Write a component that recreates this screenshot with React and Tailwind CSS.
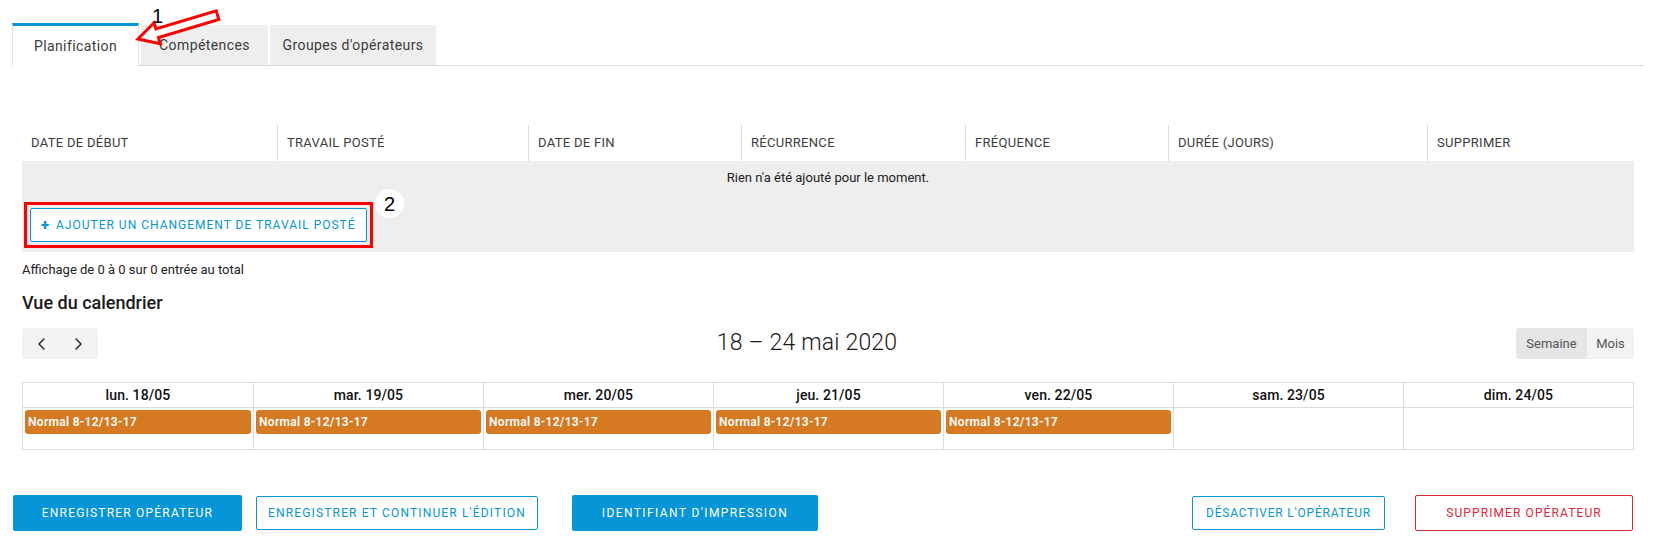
import React, { useState } from "react";

const cols = [
  { label: "Date de début", w: "w-[255px]" },
  { label: "Travail posté", w: "w-[251px]" },
  { label: "Date de fin", w: "w-[213px]" },
  { label: "Récurrence", w: "w-[224px]" },
  { label: "Fréquence", w: "w-[203px]" },
  { label: "Durée (jours)", w: "w-[259px]" },
  { label: "Supprimer", w: "w-[207px]" },
];

const days = [
  { label: "lun. 18/05", shift: true },
  { label: "mar. 19/05", shift: true },
  { label: "mer. 20/05", shift: true },
  { label: "jeu. 21/05", shift: true },
  { label: "ven. 22/05", shift: true },
  { label: "sam. 23/05", shift: false },
  { label: "dim. 24/05", shift: false },
];

const Chevron = ({ dir }) => (
  <svg width="10" height="14" viewBox="0 0 10 14" fill="none">
    <path
      d={dir === "left" ? "M7 2 L2 7 L7 12" : "M3 2 L8 7 L3 12"}
      stroke="#333"
      strokeWidth="1.6"
      strokeLinecap="round"
      strokeLinejoin="round"
    />
  </svg>
);

const App = () => {
  const [tab, setTab] = useState("planif");
  const [view, setView] = useState("semaine");

  return (
    <div className="relative w-full min-h-[543px] bg-white font-['Roboto',sans-serif] text-[#333]">
      {/* annotation 1 : arrow over the tabs */}
      <svg
        className="absolute left-0 top-0 pointer-events-none"
        width="240"
        height="60"
        viewBox="0 0 240 60"
      >
        <polygon
          points="138,39 154,22.8 155.9,29 216.2,10.9 218.8,19.5 158.5,37.6 160.3,43.8"
          fill="white"
          stroke="#ff0000"
          strokeWidth="3"
          strokeLinejoin="miter"
        />
        <text
          x="152"
          y="23"
          fontFamily="Liberation Sans, Arial, sans-serif"
          fontSize="20"
          fill="#000"
        >
          1
        </text>
      </svg>

      {/* tabs */}
      <div className="pt-[23px] pl-[12px] pr-[19px]">
        <div className="flex items-end border-b border-[#d9d9d9] h-[43px]">
          <button
            onClick={() => setTab("planif")}
            className={`w-[127px] h-[43px] -mb-px text-[14px] tracking-[0.4px] ${
              tab === "planif"
                ? "bg-white border-t-[3px] border-t-[#0696d7] border-x border-x-[#e3e3e3] text-[#3c3c3c]"
                : "bg-[#eeeeee] mt-[3px] h-[40px] text-[#3c3c3c]"
            }`}
          >
            Planification
          </button>
          <button
            onClick={() => setTab("comp")}
            className="w-[127px] h-[40px] ml-[2px] bg-[#eeeeee] text-[14px] tracking-[0.4px] text-[#3c3c3c] rounded-t-[2px]"
          >
            Compétences
          </button>
          <button
            onClick={() => setTab("groupes")}
            className="w-[166px] h-[40px] ml-[2px] bg-[#eeeeee] text-[14px] tracking-[0.4px] text-[#3c3c3c] rounded-t-[2px]"
          >
            Groupes d'opérateurs
          </button>
        </div>
      </div>

      <div className="ml-[22px] mr-[29px]">
        {/* shift table */}
        <div className="mt-[59px]">
          <div className="flex h-[36px] bg-white">
            {cols.map((c, i) => (
              <div
                key={c.label}
                className={`${c.w} flex items-center pl-[9px] text-[13px] uppercase tracking-[0.3px] text-[#3c3c3c] ${
                  i > 0 ? "border-l border-[#dddddd]" : ""
                }`}
              >
                {c.label}
              </div>
            ))}
          </div>
          <div className="bg-[#eeeeee] h-[91px] flex flex-col">
            <div className="h-[34px] flex items-center justify-center text-[13px] text-[#222]">
              Rien n'a été ajouté pour le moment.
            </div>
            <div className="relative pl-[2px] pt-[7px]">
              <div className="inline-block border-[3px] border-[#ff0000] p-[3px]">
                <button className="flex items-center gap-[6px] h-[34px] px-[10px] bg-white border border-[#0696d7] rounded-[2px] text-[#0696d7] text-[12px] uppercase tracking-[1px]">
                  <span className="text-[15px] font-black leading-none">+</span>
                  Ajouter un changement de travail posté
                </button>
              </div>
              <div className="absolute left-[353px] top-[-6px] w-[29px] h-[29px] rounded-full bg-white flex items-center justify-center font-['Liberation_Sans',sans-serif] text-[20px] text-black">
                2
              </div>
            </div>
          </div>
        </div>

        <div className="mt-[10px] text-[13px] text-[#222] leading-[16px]">
          Affichage de 0 à 0 sur 0 entrée au total
        </div>

        <h2 className="mt-[13px] text-[18px] font-medium text-[#1a1a1a] leading-[23px]">
          Vue du calendrier
        </h2>

        {/* calendar toolbar */}
        <div className="mt-[14px] flex items-center justify-between h-[31px]">
          <div className="flex h-[31px] w-[76px] bg-[#f3f3f3] rounded-[3px]">
            <button className="flex-1 flex items-center justify-center pl-[2px]">
              <Chevron dir="left" />
            </button>
            <button className="flex-1 flex items-center justify-center pr-[2px]">
              <Chevron dir="right" />
            </button>
          </div>
          <div className="text-[23px] font-light text-[#1a1a1a] tracking-[0.2px]">
            18 – 24 mai 2020
          </div>
          <div className="flex h-[31px] rounded-[3px] overflow-hidden text-[13px] text-[#555]">
            <button
              onClick={() => setView("semaine")}
              className={`w-[71px] ${
                view === "semaine" ? "bg-[#e6e6e6]" : "bg-[#f3f3f3]"
              }`}
            >
              Semaine
            </button>
            <button
              onClick={() => setView("mois")}
              className={`w-[47px] ${
                view === "mois" ? "bg-[#e6e6e6]" : "bg-[#f3f3f3]"
              }`}
            >
              Mois
            </button>
          </div>
        </div>

        {/* week grid */}
        <div className="mt-[23px] border border-[#dddddd] grid grid-cols-7">
          {days.map((d, i) => (
            <div
              key={d.label}
              className={`h-[25px] flex items-center justify-center text-[14px] font-medium tracking-[0.1px] text-[#111] border-b border-[#dddddd] ${
                i > 0 ? "border-l" : ""
              }`}
            >
              {d.label}
            </div>
          ))}
          {days.map((d, i) => (
            <div
              key={d.label + "-ev"}
              className={`h-[41px] px-[2px] pt-[2px] border-[#dddddd] ${
                i > 0 ? "border-l" : ""
              }`}
            >
              {d.shift && (
                <div className="h-[24px] bg-[#d57a22] rounded-[3px] flex items-center px-[3px] text-[12px] font-semibold tracking-[0.3px] text-white">
                  Normal 8-12/13-17
                </div>
              )}
            </div>
          ))}
        </div>
      </div>

      {/* footer actions */}
      <div className="mt-[45px] pl-[13px] pr-[30px] flex items-center justify-between">
        <div className="flex items-center">
          <button className="w-[229px] h-[36px] bg-[#0696d7] rounded-[2px] text-white text-[12px] uppercase tracking-[1.2px]">
            Enregistrer opérateur
          </button>
          <button className="ml-[14px] w-[282px] h-[34px] bg-white border border-[#0696d7] rounded-[2px] text-[#0696d7] text-[12px] uppercase tracking-[1.15px]">
            Enregistrer et continuer l'édition
          </button>
          <button className="ml-[34px] w-[246px] h-[36px] bg-[#0696d7] rounded-[2px] text-white text-[12px] uppercase tracking-[1.4px]">
            Identifiant d'impression
          </button>
        </div>
        <div className="flex items-center">
          <button className="w-[193px] h-[34px] bg-white border border-[#0696d7] rounded-[2px] text-[#0696d7] text-[12px] uppercase tracking-[0.8px]">
            Désactiver l'opérateur
          </button>
          <button className="ml-[30px] w-[218px] h-[36px] bg-white border border-[#e0283a] rounded-[2px] text-[#e0283a] text-[12px] uppercase tracking-[1.1px]">
            Supprimer opérateur
          </button>
        </div>
      </div>
    </div>
  );
};

export default App;
